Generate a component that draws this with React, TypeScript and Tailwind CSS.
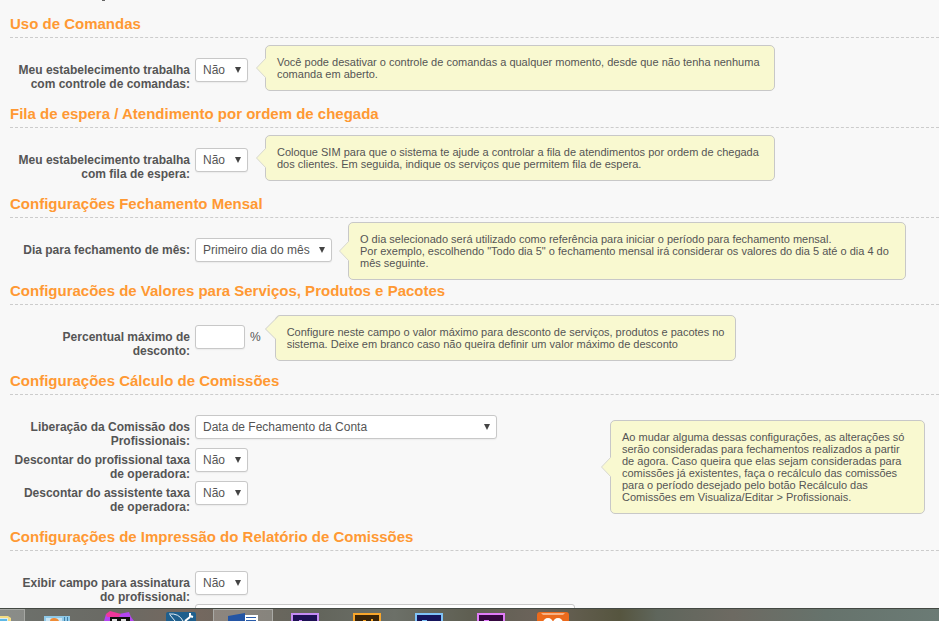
import type { ReactNode } from "react";

type CalloutProps = { children: ReactNode; className: string; corner?: boolean };

function Callout({ children, className, corner = false }: CalloutProps) {
  return (
    <aside
      className={`relative shrink rounded-[5px] border border-[#c8c8c8] bg-[#f9f9d0] py-[10px] pl-[11px] text-[11px] leading-[12px] ${className}`}
    >
      {corner ? (
        <svg className="absolute -top-px -left-[11px]" width="16" height="26" viewBox="0 0 16 26" aria-hidden="true">
          <path d="M14 .5 .5 14 10.5 24H14Z" fill="#f9f9d0" />
          <path d="M14 .5 .5 14 10.5 24" fill="none" stroke="#cfcfcb" />
        </svg>
      ) : (
        <svg className="absolute top-1/2 -left-[10px] -translate-y-1/2" width="12" height="22" viewBox="0 0 12 22" aria-hidden="true">
          <path d="M12 1H10L.5 11 10 21H12Z" fill="#f9f9d0" />
          <path d="M10 1 .5 11 10 21" fill="none" stroke="#d8d8d0" />
        </svg>
      )}
      {children}
    </aside>
  );
}

type SelectProps = { id: string; options: string[]; className: string };

function Select({ id, options, className }: SelectProps) {
  return (
    <div className={`relative h-6 shrink-0 ${className}`}>
      <select
        id={id}
        className="block h-6 w-full appearance-none rounded-[3px] border border-[#c8c8c8] bg-white pl-[7px] text-[12px] text-[#555] shadow-[0_1px_1px_#ececec]"
      >
        {options.map((option) => (
          <option key={option}>{option}</option>
        ))}
      </select>
      <svg className="pointer-events-none absolute top-[9px] right-[7px]" width="6" height="6" viewBox="0 0 6 6" aria-hidden="true">
        <path d="M0 0H6L3 6Z" fill="#444" />
      </svg>
    </div>
  );
}

type FieldProps = { id: string; label: string; children: ReactNode };

function Field({ id, label, children }: FieldProps) {
  return (
    <div className="flex h-[33px] items-start gap-[5px]">
      <label htmlFor={id} className="w-[180px] shrink-0 pt-[5px] text-right text-[12px] leading-[14px] font-bold">
        {label}
      </label>
      {children}
    </div>
  );
}

type SectionProps = { title: string; height: string; children: ReactNode };

function Section({ title, height, children }: SectionProps) {
  return (
    <section>
      <h2 className="h-[30px] border-b border-dashed border-[#ccc] pt-[6px] text-[15px] leading-[20px] font-bold text-[#f93]">
        {title}
      </h2>
      <div className={`flex items-start ${height}`}>{children}</div>
    </section>
  );
}

const yesNo = ["Não", "Sim"];

function AdobeIcon({ edge, fill, mark }: { edge: string; fill: string; mark: string }) {
  return (
    <svg width="28" height="8" viewBox="0 0 28 8" aria-hidden="true">
      <rect width="28" height="8" fill={edge} />
      <rect x="2" y="2" width="24" height="6" fill={fill} />
      <path d={mark} fill={edge} />
    </svg>
  );
}

function TaskButton({ label, active = false, children }: { label: string; active?: boolean; children: ReactNode }) {
  return (
    <button
      type="button"
      aria-label={label}
      className={`flex h-full w-[60px] shrink-0 items-end justify-center ${
        active ? "border border-b-0 border-[#aaaaa6] bg-white/20" : ""
      }`}
    >
      {children}
    </button>
  );
}

function Taskbar() {
  return (
    <footer className="flex h-[13px] shrink-0 gap-[2px] overflow-hidden border-t border-[#444943] bg-[linear-gradient(90deg,#6d716c_0%,#6a6a64_12%,#75685f_20%,#63655c_34%,#6c7068_42%,#5f5f52_50%,#6b635a_57%,#56553f_66%,#5f665c_70%,#6d6a62_78%,#66736c_88%,#6b7b75_100%)]">
      <button
        type="button"
        aria-label="Explorer"
        className="flex h-full w-[25px] shrink-0 items-end border-t border-r border-[#a5a7a3] bg-white/20"
      >
        <svg width="12" height="5" viewBox="0 0 12 5" aria-hidden="true">
          <path d="M0 0H8L11 2V5H0Z" fill="#f3dc83" />
          <path d="M0 2H8V5H0Z" fill="#d9ecf2" />
          <path d="M0 3H7V5H0Z" fill="#5cb8e6" />
        </svg>
      </button>
      <TaskButton label="Painel">
        <svg width="26" height="5" viewBox="0 0 26 5" aria-hidden="true">
          <path d="M0 0H26V5H0Z" fill="#8fc9e8" />
          <path d="M2 2H18V5H2Z" fill="#c9e5f4" />
          <path d="M20 1H21V5H20ZM23 1H24V5H23Z" fill="#3f7ea8" />
          <path d="M6 5Q6 2 10 2T15 5Z" fill="#ef8b35" />
        </svg>
      </TaskButton>
      <TaskButton label="PhpStorm">
        <svg width="30" height="10" viewBox="0 0 30 10" aria-hidden="true">
          <path d="M15 3 25 1 27 6 30 10H0L2 3 13 5Z" fill="#b345f1" />
          <path d="M2 3 6 0 17 3 15 6H3Z" fill="#f0379b" />
          <path d="M6 6H26V10H6Z" fill="#111" />
          <path d="M8 8H13V10H8ZM17 8H22V10H17Z" fill="#ddd" />
        </svg>
      </TaskButton>
      <TaskButton label="MySQL Workbench">
        <svg width="30" height="9" viewBox="0 0 30 9" aria-hidden="true">
          <rect width="30" height="12" rx="2" fill="#1f5f8d" />
          <path d="M3 2Q13 1 17 9M4 3 9 9" fill="none" stroke="#e4f0f7" />
          <path d="M24 1V4L27 5M24 5 19 9" fill="none" stroke="#fff" strokeWidth="2" />
        </svg>
      </TaskButton>
      <TaskButton label="Word" active>
        <svg width="30" height="8" viewBox="0 0 30 8" aria-hidden="true">
          <path d="M16 2H30V8H16Z" fill="#fff" />
          <path d="M18 4H28V5H18ZM18 7H28V8H18Z" fill="#2a5caa" />
          <path d="M0 3 17 0V8H0Z" fill="#2455a4" />
        </svg>
      </TaskButton>
      <TaskButton label="After Effects">
        <AdobeIcon edge="#c58cf5" fill="#1e1055" mark="M8 7H11V8H8Z" />
      </TaskButton>
      <TaskButton label="Illustrator">
        <AdobeIcon edge="#f9a62b" fill="#3a2408" mark="M10 7H13V8H10ZM18 6H20V8H18Z" />
      </TaskButton>
      <TaskButton label="Photoshop">
        <AdobeIcon edge="#7fc3f7" fill="#15155c" mark="M7 7H12V8H7Z" />
      </TaskButton>
      <TaskButton label="Premiere">
        <AdobeIcon edge="#e07cf8" fill="#35083f" mark="M7 7H12V8H7Z" />
      </TaskButton>
      <TaskButton label="XAMPP">
        <svg width="32" height="9" viewBox="0 0 32 9" aria-hidden="true">
          <rect width="32" height="14" rx="3" fill="#ec6a1c" />
          <path d="M4 1H28L26 3H6Z" fill="#f7b184" />
          <circle cx="11" cy="11" r="5" fill="#fff" />
          <circle cx="21" cy="11" r="5" fill="#fff" />
        </svg>
      </TaskButton>
    </footer>
  );
}

export default function App() {
  return (
    <div className="flex h-screen flex-col overflow-hidden bg-[#f8f8f8] font-['Liberation_Sans',Arial,sans-serif] text-[#555]">
      <main className="min-h-0 flex-1 overflow-hidden pl-[10px]">
        <div className="h-2 pl-[92px]">
          <div className="h-px w-[3px] bg-[#666]" />
        </div>

        <Section title="Uso de Comandas" height="h-[60px]">
          <div className="pt-5">
            <Field id="comandas" label="Meu estabelecimento trabalha com controle de comandas:">
              <Select id="comandas" options={yesNo} className="w-[53px]" />
            </Field>
          </div>
          <Callout className="mt-[7px] ml-[17px] w-[510px] pr-[11px]">
            Você pode desativar o controle de comandas a qualquer momento, desde que não tenha nenhuma comanda em aberto.
          </Callout>
        </Section>

        <Section title="Fila de espera / Atendimento por ordem de chegada" height="h-[60px]">
          <div className="pt-5">
            <Field id="fila" label="Meu estabelecimento trabalha com fila de espera:">
              <Select id="fila" options={yesNo} className="w-[53px]" />
            </Field>
          </div>
          <Callout className="mt-[7px] ml-[17px] w-[510px] pr-[11px]">
            Coloque SIM para que o sistema te ajude a controlar a fila de atendimentos por ordem de chegada dos clientes. Em
            seguida, indique os serviços que permitem fila de espera.
          </Callout>
        </Section>

        <Section title="Configurações Fechamento Mensal" height="h-[57px]">
          <div className="pt-5">
            <Field id="dia" label="Dia para fechamento de mês:">
              <Select id="dia" options={["Primeiro dia do mês", "Todo dia 5"]} className="w-[137px]" />
            </Field>
          </div>
          <Callout className="mt-[4px] ml-[16px] w-[558px] pr-[11px]">
            O dia selecionado será utilizado como referência para iniciar o período para fechamento mensal.
            <br />
            Por exemplo, escolhendo "Todo dia 5" o fechamento mensal irá considerar os valores do dia 5 até o dia 4 do mês
            seguinte.
          </Callout>
        </Section>

        <Section title="Configuracões de Valores para Serviços, Produtos e Pacotes" height="h-[60px]">
          <div className="pt-5">
            <Field id="desconto" label="Percentual máximo de desconto:">
              <input
                id="desconto"
                type="text"
                className="h-6 w-[50px] rounded-[3px] border border-[#c8c8c8] bg-white px-[7px] text-[12px] shadow-[0_1px_1px_#ececec]"
              />
              <span className="pt-[5px] text-[12px] leading-[14px]">%</span>
            </Field>
          </div>
          <Callout className="mt-[10px] ml-[14px] w-[461px] pr-[6px]" corner>
            Configure neste campo o valor máximo para desconto de serviços, produtos e pacotes no sistema. Deixe em branco
            caso não queira definir um valor máximo de desconto
          </Callout>
        </Section>

        <Section title="Configurações Cálculo de Comissões" height="h-[126px]">
          <div className="pt-5">
            <Field id="liberacao" label="Liberação da Comissão dos Profissionais:">
              <Select id="liberacao" options={["Data de Fechamento da Conta"]} className="w-[302px]" />
            </Field>
            <Field id="taxa-profissional" label="Descontar do profissional taxa de operadora:">
              <Select id="taxa-profissional" options={yesNo} className="w-[53px]" />
            </Field>
            <Field id="taxa-assistente" label="Descontar do assistente taxa de operadora:">
              <Select id="taxa-assistente" options={yesNo} className="w-[53px]" />
            </Field>
          </div>
          <Callout className="mt-[25px] mr-[14px] ml-auto w-[315px] pr-[11px]">
            Ao mudar alguma dessas configurações, as alterações só serão consideradas para fechamentos realizados a partir de
            agora. Caso queira que elas sejam consideradas para comissões já existentes, faça o recálculo das comissões para
            o período desejado pelo botão Recálculo das Comissões em Visualiza/Editar &gt; Profissionais.
          </Callout>
        </Section>

        <Section title="Configurações de Impressão do Relatório de Comissões" height="h-[90px]">
          <div className="pt-5">
            <Field id="assinatura" label="Exibir campo para assinatura do profissional:">
              <Select id="assinatura" options={yesNo} className="w-[53px]" />
            </Field>
            <div className="pl-[185px]">
              <input
                type="text"
                aria-label="Texto"
                className="block h-6 w-[380px] rounded-[3px] border border-[#c8c8c8] bg-white px-[7px] text-[12px]"
              />
            </div>
          </div>
        </Section>
      </main>
      <Taskbar />
    </div>
  );
}
